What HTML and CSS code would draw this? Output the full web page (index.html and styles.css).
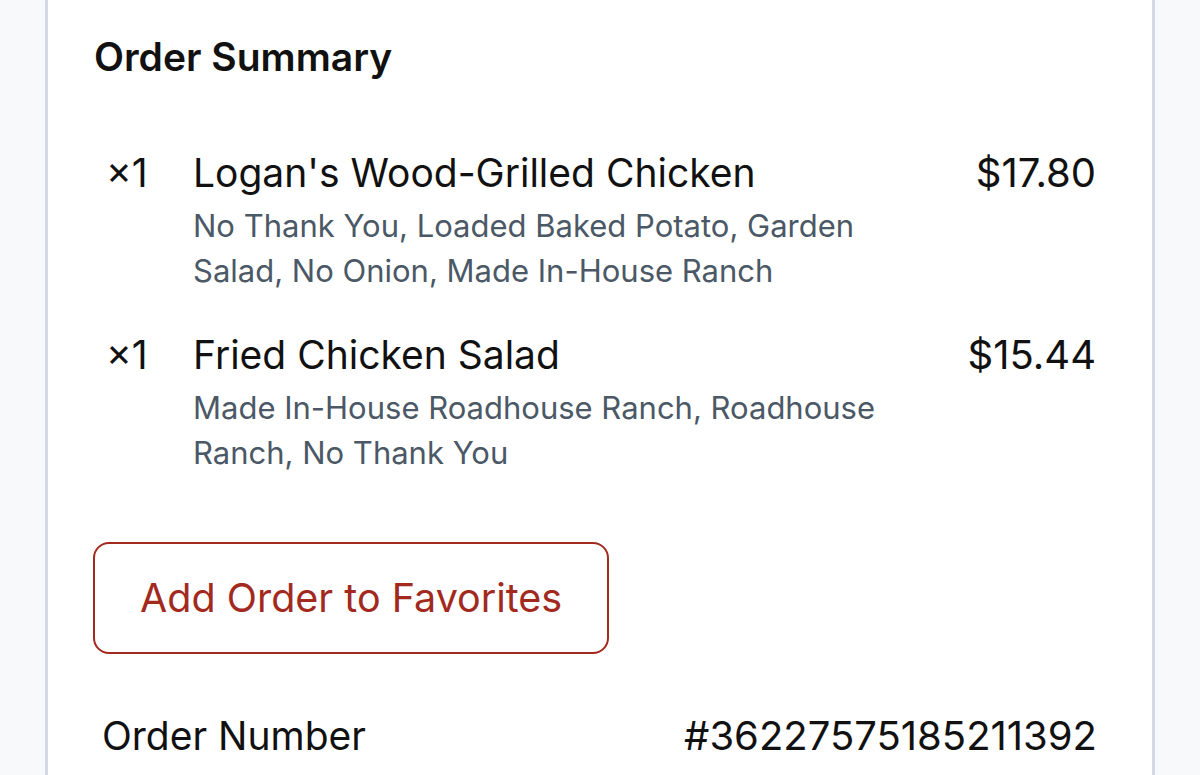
FILE: index.html
```html
<!DOCTYPE html>
<html lang="en">
<head>
<meta charset="UTF-8" />
<meta name="viewport" content="width=device-width, initial-scale=1.0"/>
<title>Order Summary</title>
<link rel="stylesheet" href="styles.css">
</head>
<body>
  <div class="card">
    <h2 class="title">Order Summary</h2>

    <div class="items">
      <div class="item">
        <span class="qty">×1</span>
        <div class="info">
          <div class="name">Logan's Wood-Grilled Chicken</div>
          <div class="mods">No Thank You, Loaded Baked Potato, Garden Salad, No Onion, Made In-House Ranch</div>
        </div>
        <span class="price">$17.80</span>
      </div>
      <div class="item">
        <span class="qty">×1</span>
        <div class="info">
          <div class="name">Fried Chicken Salad</div>
          <div class="mods">Made In-House Roadhouse Ranch, Roadhouse Ranch, No Thank You</div>
        </div>
        <span class="price">$15.44</span>
      </div>
    </div>

    <button class="fav-btn">Add Order to Favorites</button>

    <div class="row">
      <span>Order Number</span>
      <span class="num">#36227575185211392</span>
    </div>
  </div>
</body>
</html>
```
FILE: styles.css
```css
:root {
  --bg: #f8f9fa;
  --line: #d4dae4;
  --text: #111111;
  --muted: #4b5866;
  --brand: #a2291e;
  --font: 'Inter', 'Noto Sans', sans-serif;
}

html, body {
  margin: 0;
  height: 100%;
}

body {
  background: var(--bg);
  font-family: var(--font);
  color: var(--text);
  overflow: hidden;
}

.card {
  margin: 0 45px;
  min-height: 100%;
  background: #fff;
  border-left: 3px solid var(--line);
  border-right: 3px solid var(--line);
  padding: 32px 55px 0 46px;
  box-sizing: border-box;
}

.title {
  margin: 0;
  font-size: 39px;
  line-height: 50px;
  font-weight: 600;
}

.items {
  margin-top: 65px;
  display: flex;
  flex-direction: column;
  gap: 36px;
}

.item {
  display: grid;
  grid-template-columns: 99px 1fr auto;
  align-items: start;
}

.info {
  padding-right: 80px;
}

.qty, .name {
  font-size: 39px;
  line-height: 52px;
}

.price {
  font-size: 40px;
  line-height: 52px;
  padding-right: 1px;
}

.qty {
  padding-left: 12px;
}

.mods {
  margin-top: 4px;
  font-size: 31px;
  line-height: 45px;
  color: var(--muted);
}

.fav-btn {
  margin: 67px 0 0 -1px;
  padding: 29px 45px;
  background: #fff;
  border: 2px solid var(--brand);
  border-radius: 16px;
  color: var(--brand);
  font-family: var(--font);
  font-size: 39.5px;
  line-height: 50px;
  cursor: pointer;
}

.row {
  margin-top: 56px;
  padding: 0 0 0 8px;
  display: flex;
  justify-content: space-between;
  font-size: 39px;
  line-height: 52px;
}

.num {
  font-size: 40px;
}
```
